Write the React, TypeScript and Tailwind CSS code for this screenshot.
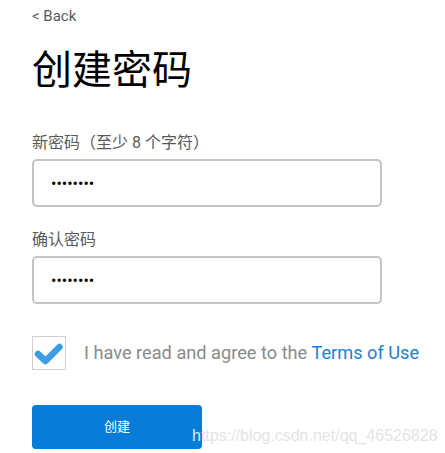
import React from 'react';

export default function App() {
  return (
    <div className="relative min-h-[453px] w-[445px] bg-white pl-[32px] pt-[6px]" style={{ fontFamily: 'Roboto, "Noto Sans CJK SC", sans-serif' }}>
      <a className="block text-[15px] leading-[20px] text-[#555b61]">&lt; Back</a>
      <h1 className="mt-[21px] text-[40px] leading-[48px] font-normal text-black">创建密码</h1>

      <label className="mt-[38px] block text-[16px] leading-[20px] text-[#5a5a5a]">新密码（至少 8 个字符）</label>
      <input
        type="password"
        defaultValue="12345678"
        className="mt-[6px] block h-[48px] w-[350px] rounded-[5px] border-2 border-[#c2c5c8] px-[17px] text-[16px] text-black outline-none"
      />

      <label className="mt-[23px] block text-[16px] leading-[20px] text-[#5a5a5a]">确认密码</label>
      <input
        type="password"
        defaultValue="12345678"
        className="mt-[6px] block h-[48px] w-[350px] rounded-[5px] border-2 border-[#c2c5c8] px-[17px] text-[16px] text-black outline-none"
      />

      <div className="mt-[32px] flex h-[34px] items-center">
        <div className="flex h-[34px] w-[34px] shrink-0 items-center justify-center border border-[#cfcfcf] bg-white">
          <svg width="30" height="26" viewBox="0 0 30 26">
            <path d="M4 14 L11.5 21 L25.5 7" fill="none" stroke="#3b9de3" strokeWidth="6.5" strokeLinecap="round" strokeLinejoin="round" />
          </svg>
        </div>
        <span className="ml-[18px] whitespace-nowrap text-[18.2px] text-[#8a8a8a]">
          I have read and agree to the <a className="text-[#1e7fd2]">Terms of Use</a>
        </span>
      </div>

      <button className="mt-[35px] flex h-[44px] w-[170px] items-center justify-center rounded-[4px] bg-[#067cd8] text-[13px] text-white">
        创建
      </button>

      <div className="absolute left-[192px] top-[424px] text-[16px] text-[#e4e4e4]" style={{ fontFamily: '"Liberation Sans", Arial, sans-serif' }}>
        https://blog.csdn.net/qq_46526828
      </div>
    </div>
  );
}
